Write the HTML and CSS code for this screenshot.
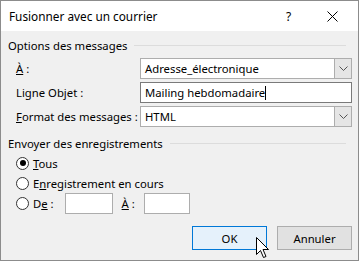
FILE: index.html
```html
<!DOCTYPE html>
<html lang="fr">
<head>
<meta charset="utf-8">
<link rel="stylesheet" href="styles.css">
</head>
<body>
<div class="window">
  <div class="titlebar">
    <span class="title">Fusionner avec un courrier</span>
    <span class="help">?</span>
    <span class="close"><svg width="11" height="11" viewBox="0 0 11 11"><path d="M0.5 0.5 L10.5 10.5 M10.5 0.5 L0.5 10.5" stroke="#000" stroke-width="1" fill="none"/></svg></span>
  </div>
  <div class="content">
    <div class="group-head"><span>Options des messages</span><i class="rule"></i></div>
    <div class="form">
      <label><u>À</u> :</label>
      <div class="combo"><span class="val">Adresse_électronique</span><span class="drop"><svg width="9" height="5" viewBox="0 0 9 5"><path d="M0.5 0.5 L4.5 4.5 L8.5 0.5" stroke="#555" fill="none"/></svg></span></div>
      <label>Ligne Ob<u>j</u>et :</label>
      <div class="textbox"><span class="val">Mailing hebdomadaire</span><i class="caret"></i></div>
      <label><u>F</u>ormat des messages :</label>
      <div class="combo"><span class="val">HTML</span><span class="drop"><svg width="9" height="5" viewBox="0 0 9 5"><path d="M0.5 0.5 L4.5 4.5 L8.5 0.5" stroke="#555" fill="none"/></svg></span></div>
    </div>
    <div class="group-head second"><span>Envoyer des enregistrements</span><i class="rule"></i></div>
    <div class="radios">
      <div class="radio"><i class="dot on"></i><span><u>T</u>ous</span></div>
      <div class="radio"><i class="dot"></i><span>E<u>n</u>registrement en cours</span></div>
      <div class="radio"><i class="dot"></i><span class="de">D<u>e</u> :</span><i class="small"></i><span class="a"><u>À</u> :</span><i class="small s2"></i></div>
    </div>
    <div class="buttons">
      <button class="btn ok">OK</button>
      <button class="btn">Annuler</button>
    </div>
  </div>
  <svg class="cursor" width="13" height="22" viewBox="0 0 13 22"><path d="M0.5 0.5 L0.5 17.5 L4.5 13.5 L7.5 20.5 L10 19.5 L7 12.5 L12.5 12.5 Z" fill="#fff" stroke="#000" stroke-width="1" stroke-linejoin="miter"/></svg>
</div>
</body>
</html>
```
FILE: styles.css
```css
html, body { margin: 0; padding: 0; }
body { font-family: "Noto Sans", "Open Sans", sans-serif; font-size: 11.3px; color: #000; }
.window {
  position: relative;
  width: 359px; height: 261px; box-sizing: border-box;
  border: 1px solid #8c8c8c;
  background: #f0f0f0; display: flex; flex-direction: column; overflow: hidden;
}
.titlebar {
  height: 30px; background: #fff; display: flex; align-items: center;
  padding-left: 8px; flex: none;
}
.title { flex: 1; font-size: 11.8px; }
.help { width: 12px; margin-right: 29px; font-size: 12px; }
.close { width: 11px; height: 11px; margin-right: 20px; display: flex; }
.content { padding: 6px 6px 0 7px; display: flex; flex-direction: column; }
.group-head { display: flex; align-items: center; height: 16px; white-space: nowrap; }
.group-head .rule { flex: 1; height: 1px; background: #dcdcdc; margin-left: 7px; margin-right: 6px; }
.form {
  display: grid; grid-template-columns: 124px 212px; row-gap: 3px;
  padding-left: 8px; margin-top: 5px; align-items: center;
}
.form label { white-space: nowrap; }
.combo, .textbox {
  height: 21px; box-sizing: border-box; background: #fff;
  border: 1px solid #7a7a7a; display: flex; align-items: center;
  position: relative;
}
.combo { border-color: #adadad; }
.val { padding-left: 4px; white-space: nowrap; }
.drop {
  margin-left: auto; width: 17px; height: 19px; box-sizing: border-box;
  background: #e5e5e5; border-left: 1px solid #adadad;
  display: flex; align-items: center; justify-content: center;
}
.caret { width: 1px; height: 14px; background: #000; }
.textbox { border-color: #7a7a7a; }
.group-head.second { margin-top: 8px; }
.radios { display: flex; flex-direction: column; padding-left: 8px; margin-top: 2px; }
.radio { display: flex; align-items: center; height: 20px; white-space: nowrap; }
.dot {
  width: 13px; height: 13px; border: 1px solid #333; border-radius: 50%;
  background: #fff; margin-right: 4px; position: relative; box-sizing: border-box; flex: none;
}
.dot.on::after {
  content: ""; position: absolute; left: 2.5px; top: 2.5px; width: 6px; height: 6px;
  background: #000; border-radius: 50%;
}
.small { width: 48px; height: 21px; box-sizing: border-box; border: 1px solid #adadad; background: #fff; flex: none; }
.small.s2 { width: 46px; }
.de { margin-right: 11px; }
.a { margin-left: 9px; margin-right: 9px; }
.buttons { display: flex; justify-content: flex-end; gap: 10px; margin-top: 13px; }
.btn {
  width: 75px; height: 24px; box-sizing: border-box; font: inherit;
  background: #e1e1e1; border: 1px solid #adadad; padding: 0; color: #000;
}
.btn.ok { background: #e5f1fb; border-color: #0078d7; }
.cursor { position: absolute; left: 255px; top: 236px; }
```
